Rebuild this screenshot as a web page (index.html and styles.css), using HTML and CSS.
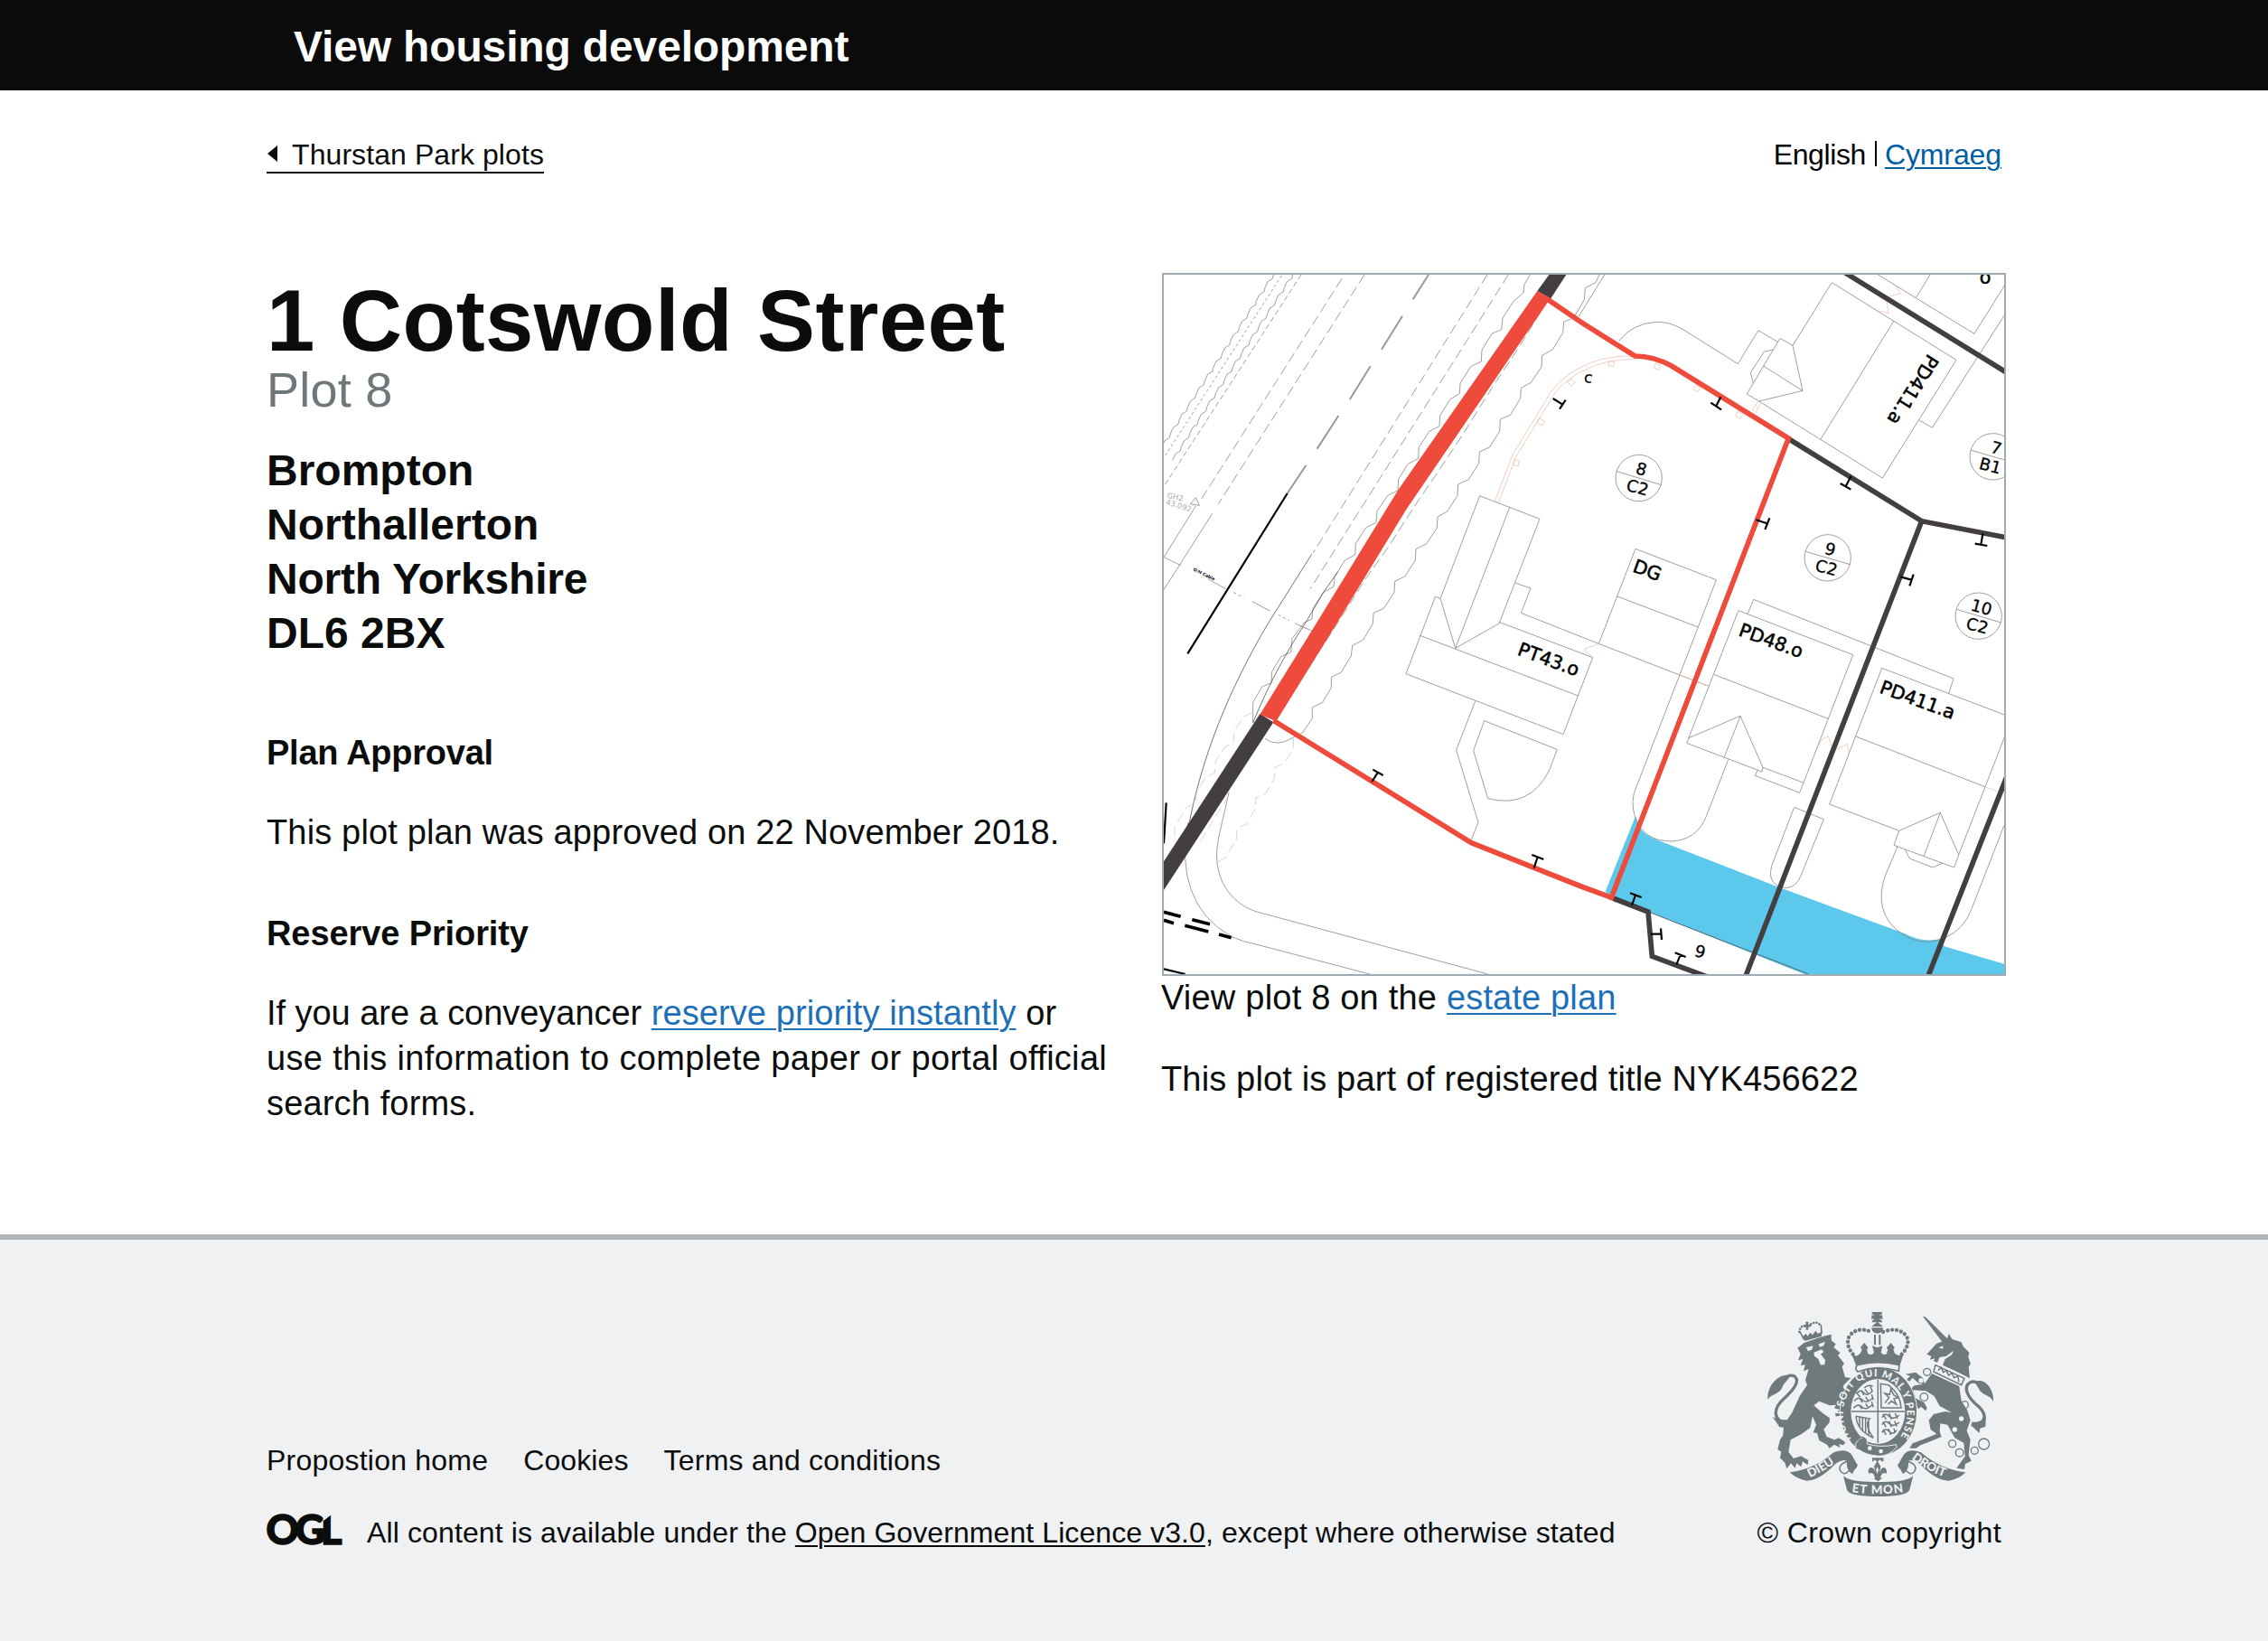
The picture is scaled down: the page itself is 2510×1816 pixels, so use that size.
FILE: index.html
```html
<!DOCTYPE html>
<html lang="en">
<head>
<meta charset="utf-8">
<title>View housing development</title>
<link rel="stylesheet" href="styles.css">
</head>
<body>
<header class="header">
  <div class="container"><span class="header-title">View housing development</span></div>
</header>

<nav class="container topbar">
  <a class="back" href="#"><svg class="back-arrow" viewBox="0 0 11 18"><path d="M11 0V18L0 9Z"/></svg>Thurstan Park plots</a>
  <div class="languages"><span class="lang-current">English</span><a class="lang-link" href="#">Cymraeg</a></div>
</nav>

<main class="container main">
  <section class="details">
    <h1 class="title">1 Cotswold Street</h1>
    <div class="plot">Plot 8</div>
    <div class="address">Brompton<br>Northallerton<br><span class="address-county">North Yorkshire</span><br>DL6 2BX</div>
    <h2 class="subhead subhead-approval">Plan Approval</h2>
    <p class="text">This plot plan was approved on 22 November 2018.</p>
    <h2 class="subhead">Reserve Priority</h2>
    <p class="text reserve"><span class="lead">If you are a conveyancer </span><a class="link" href="#">reserve priority instantly</a> or<br><span class="wide">use this information to complete paper or portal o<span class="lig">ffi</span>cial</span><br>search forms.</p>
  </section>

  <section class="plan">
    <svg class="map" viewBox="24 42 2790 2322" preserveAspectRatio="none">
      <!-- flood zone -->
      <path class="water" d="M1590 1840L1605 1880Q1625 1905 1660 1918L2065 2075 2485 2230Q2540 2260 2600 2248L2615 2272 2820 2332V2370H2165L1640 2160 1515 2110 1490 2090Z"/>
      <path class="thin dark" d="M1640 2160L2165 2364"/>
      <!-- road and verge -->
      <g class="thin">
        <path d="M388 42l-3 13-16 10-9.500 21l-3 13-16 10-9.500 21l-3 13-16 10-9.500 21l-3 13-16 10-9.500 21l-3 13-16 10-9.500 21l-3 13-16 10-9.500 21l-3 13-16 10-9.500 21l-3 13-16 10-9.500 21l-3 13-16 10-9.500 21l-3 13-16 10-9.500 21l-3 13-16 10-9.500 21l-3 13-16 10-9.500 21l-3 13-16 10-9.500 21"/>
        <path d="M452 42l-3 13-16 10-9.500 21l-3 13-16 10-9.500 21l-3 13-16 10-9.500 21l-3 13-16 10-9.500 21l-3 13-16 10-9.500 21l-3 13-16 10-9.500 21l-3 13-16 10-9.500 21l-3 13-16 10-9.500 21l-3 13-16 10-9.500 21l-3 13-16 10-9.500 21l-3 13-16 10-9.500 21l-3 13-16 10-9.500 21l-3 13-16 10-9.500 21l-3 13-16 10-9.500 21"/>
        <path class="dash-s" d="M415 45L24 650"/>
        <path class="dash-m" d="M480 42L24 745"/>
        <path class="dash-l" d="M615 55L150 785M690 42L205 803M1098 42L520 965M1168 42L510 1085"/>
        <path class="dash-l" d="M1275 165L1205 280 1115 415 1015 575 925 710 850 820 770 945 695 1050 600 1200 535 1300 470 1400 400 1515"/>
        <path d="M130 810L24 980M185 835L24 1088M24 980L80 1007M170 1052L230 1085M318 1127L376 1158M460 1200L515 1224"/>
        <path class="dash-s" d="M256 1097L290 1113M404 1171L440 1190"/>
        <path d="M1240 42L1221 74 1218 102 1185 130 1149 186 1145 224 1113 238 1080 292 1078 330 1043 347 1008 402 1006 437 975 455 941 510 939 545 905 562 871 615 869 652 835 670 803 720 801 758 767 775 732 827 729 865 695 882 661 935 659 972 625 990 591 1045 588 1078 555 1095 519 1150 516 1185 490 1197 450 1250 446 1295 413 1310 383 1360 381 1397 350 1410 320 1462 320 1530"/>
        <path d="M1470 42L1458 68 1423 86 1420 125 1385 185 1352 198 1349 235 1315 290 1280 310 1278 348 1243 400 1210 418 1208 452 1174 508 1141 522 1139 562 1105 615 1072 630 1070 668 1036 722 1001 738 999 775 965 828 933 846 931 883 895 936 861 953 859 990 824 1044 791 1060 789 1097 754 1150 720 1165 718 1200 685 1255 650 1273 646 1308 612 1363 580 1378 580 1413 550 1463 517 1478 517 1515 485 1562 450 1580Q400 1612 360 1582M1487 42L1402 180"/>
        <path class="dark" d="M515 970L370 1200C240 1420 150 1640 105 1880M602 1028L555 1095 493 1200C420 1310 360 1430 320 1530"/>
        <path d="M105 1860Q80 1990 115 2085 150 2185 250 2240 290 2258 330 2265L708 2364M240 1760C225 1840 195 1930 200 1980 205 2080 270 2145 355 2163L1100 2364"/>
      </g>
      <path class="thin pale dash-l" d="M320 1495L288 1510 257 1560 255 1597 227 1610 196 1658 194 1695 162 1712 133 1760 130 1795 98 1812 60 1875V1910M455 1580L453 1615 425 1663 392 1678 391 1715 362 1765 330 1778 328 1815 300 1865 267 1880 265 1917 228 1978 190 1998M240 1770L135 1940"/>
      <path class="centre-dash" d="M903 42L851 124M816 179L747 290M710 346L641 457M604 510L533 620M496 675L434 768"/>
      <path class="ink" d="M434 768L103 1300M32 1795L24 1930M24 2347L95 2364"/>
      <path class="ink heavy" d="M24 2158L80 2173M118 2183L177 2198M24 2185L57 2195M94 2203L172 2223M207 2232L248 2243"/>
      <path class="thin" d="M130 782L112 803 142 808Z"/>
      <text class="survey" transform="translate(34 782) rotate(13)">GH2</text>
      <text class="survey" transform="translate(29 804) rotate(17)">43.092</text>
      <text class="cable" transform="translate(121 1024) rotate(26)">O/H Cable</text>

      <!-- houses and drives -->
      <g class="thin" transform="translate(1410 0)">
        <path d="M832 68L702 277 735 427 590 462 550 438 660 253 702 277M832 68L1245 325 1000 717 590 462M1038 195L795 588M605 345L735 427M655 267L588 227 520 338 335 222Q290 197 250 199 170 203 125 262M637 291L607 298 562 367 571 402M1122 525L1165 550 1404 178M985 42L1305 238 1410 70M1158 42L1112 117"/>
        <circle cx="191" cy="717" r="77"/><circle cx="818" cy="982" r="77"/><circle cx="1319" cy="1175" r="77"/><circle cx="1367" cy="646" r="77"/>
        <path d="M118 695L266 740M745 961L892 1004M1246 1153L1394 1197M1294 625L1410 658"/>
        <path d="M180 952L448 1055 388 1212 180 1750Q163 1790 178 1840 205 1923 300 1923 385 1918 415 1840L488 1652M180 952L58 1267M120 1110L388 1212"/>
        <path d="M522 1157L350 1597 600 1692 603 1678 528 1507 357 1580M528 1507L475 1643M522 1157L902 1304 725 1762 577 1705 585 1687M603 1678L737 1728M442 1370L820 1516M553 1167L572 1120 1236 1383 1220 1432"/>
        <path d="M1410 1505L998 1348 824 1800 1055 1888 1192 1828 1253 1968 1238 2010 1038 1936 1055 1888M1192 1828L1137 1973M1253 1968L1410 1565M912 1575L1340 1742M1075 1950L1090 1980 1167 2010 1200 1995M1050 1940L1010 2035Q975 2135 1030 2200 1110 2285 1210 2242 1270 2215 1295 2150L1404 1870"/>
        <path d="M707 1810L805 1850 730 2035Q715 2075 680 2078 615 2070 632 2005Z"/>
      </g>
      <g class="thin">
        <path d="M1073 776L1272 853 1137 1200 992 1282 942 1117 1073 776M942 1117L925 1111 828 1367 1350 1568 1448 1313 1137 1195M1172 815L992 1282M875 1240L1400 1440M1190 1065L1242 1083 1210 1165 1468 1267 1830 1407"/>
        <path d="M1058 1458L995 1620 1068 1860 1045 1918M1088 1523L1330 1618 1305 1685Q1240 1817 1100 1781L1052 1622Z"/>
      </g>
      <g class="fence">
        <path d="M1123 795L1182 640 1310 430Q1360 365 1440 335 1500 310 1590 312M1135 799L1194 645 1320 438Q1365 380 1440 350 1500 322 1590 323"/>
        <path d="M1997 462L1978 495M2007 466L1988 500M1735 1370L1833 1408M1448 1313L1420 1285 1468 1267M2750 1742L2790 1757"/>
        <path d="M2197 1605L2210 1585 2230 1574 2242 1610M2258 1618L2292 1600Q2300 1620 2298 1637M2450 72L2470 105 2422 117 2430 170 2400 162"/>
        <path d="M1377 388l12 12-12 11-12-12ZM1270 519l18 8-8 16-17-9ZM1187 655l18 6-5 17-16-5ZM1502 328l17 4-2 15-17-4ZM1657 336l16 7-5 15-17-6ZM1790 408l16 9-9 15-15-9ZM1931 495l16 10-9 15-15-9Z"/>
      </g>

      <!-- plot boundaries -->
      <path class="boundary" d="M2285 35L2822 367M2100 588L2540 860 2822 915M2540 860L1956 2370M2824 1705L2562 2370M1515 2112L1632 2157 1645 2305 1826 2372"/>
      <path class="boundary-fill" d="M1303 42H1360L1308 122 1264 96ZM343 1500L388 1528 24 2085V1990Z"/>
      <path class="plot-line" d="M1290 118L1410 200 1588 312Q1650 312 1710 345L2098 585 1510 2110 1410 2073 1045 1928 388 1522"/>
      <path class="plot-fill" d="M1264 96L1308 122 1296 137 830 820 598 1200 397 1525 343 1502 530 1200 803 755Z"/>

      <path class="ink" d="M1338 488L1358 458M1348 473L1316 453M1840 467L1875 490M1858 478L1873 448M2270 735L2305 755M2288 745L2305 712M2035 850L2020 888M2027 868L1990 856M2513 1037L2500 1075M2506 1055L2470 1045M2717 935L2758 942M2737 938L2743 902M718 1685L752 1704M735 1694L715 1725M1246 1968L1285 1983M1265 1975L1253 2012M1572 2095L1610 2109M1590 2102L1578 2135M1674 2212L1677 2250M1676 2231L1640 2231M1721 2293L1757 2307M1739 2300L1726 2332"/>

      <g class="label">
        <text transform="translate(1605 706) rotate(15)">8</text><text transform="translate(1592 767) rotate(15)">C2</text>
        <text transform="translate(2232 972) rotate(15)">9</text><text transform="translate(2219 1033) rotate(15)">C2</text>
        <text transform="translate(2734 1165) rotate(15)">10</text><text transform="translate(2720 1226) rotate(15)">C2</text>
        <text transform="translate(2783 636) rotate(15)">7</text><text transform="translate(2763 695) rotate(15)">B1</text>
        <text transform="translate(1800 2308) rotate(15)">9</text>
        <text class="small" transform="translate(1431 400) rotate(8)">c</text>
      </g>
      <g class="house">
        <text transform="translate(1577 1027) rotate(20)">DG</text>
        <text transform="translate(1929 1239) rotate(20)">PD48.o</text>
        <text transform="translate(2397 1429) rotate(20)">PD411.a</text>
        <text transform="translate(1195 1303) rotate(20)">PT43.o</text>
        <text transform="translate(2562 302) rotate(122)">PD411.a</text>
        <text transform="translate(2732 72)">o</text>
      </g>
    </svg>
    <p class="text caption"><span class="view">View plot 8 on the </span><a class="link" href="#">estate plan</a></p>
    <p class="text registered">This plot is part of registered title NYK456622</p>
  </section>
</main>

<footer class="footer">
  <div class="container footer-inner">
    <div class="footer-left">
      <ul class="footer-links"><li>Propostion home</li><li class="cookies">Cookies</li><li>Terms and conditions</li></ul>
      <div class="licence">
        <svg class="ogl" viewBox="0 0 83 40"><text class="ogl-text" x="-1.500" y="35.500" textLength="84" lengthAdjust="spacing">OGL</text><path class="ogl-cut" d="M60 0H73L71 3 62 10Z"/></svg>
        <span>All content is available under the <a class="licence-link" href="#">Open Government Licence v3.0</a>, except where otherwise stated</span>
      </div>
    </div>
    <div class="crown">
      <svg class="crest" viewBox="75 60 760 622">
        <defs>
          <path id="garter" d="M357 487A106 124 0 1 1 500 502"/>
          <path id="dieu" d="M219 616Q275 590 322 553"/>
          <path id="mon" d="M350 662Q445 678 540 662"/>
          <path id="droit" d="M556 553Q610 596 680 618"/>
        </defs>
        <!-- lion -->
        <path class="c" d="M178 185L200 168 245 152 270 145 290 140V160L305 172 298 183 320 202 312 210 333 236 326 248 336 282 355 285 330 310 345 340 352 385 348 418 335 408 330 428 320 408 306 416 303 402 318 390 300 385 306 374 285 376 250 362 232 376 262 402 285 418 284 432 265 455 275 480 300 490 315 484 338 498 330 508 316 504 320 516 300 506 284 518 276 506 250 492 243 468 230 466 240 440 228 412 220 450 190 472 155 490 148 530 165 552 190 544 214 558 212 574 195 562 190 580 175 568 170 584 156 568 142 586 136 566 120 550 124 530 112 522 120 490 130 475 132 440 160 400 185 345 210 308 204 292 215 255 198 262 203 240 188 244 196 222 180 226 188 205Z"/>
        <path class="b" d="M207 183L230 178 225 192 212 195ZM248 172L270 165 265 178 252 182ZM232 200L258 190 265 198 255 206 270 225 268 240 255 242 247 222 234 212Z"/>
        <path class="l" d="M138 432C95 425 98 385 130 356 165 325 190 292 166 278 150 272 135 284 124 300"/>
        <path class="c" d="M152 276C112 270 76 312 79 356 90 338 120 338 128 315 132 300 150 292 152 276ZM94 413Q115 428 155 422L140 450 118 448 108 432Z"/>
        <path class="l3" d="M200 158L185 130M202 157L258 138M258 138L256 108"/>
        <path class="dots" d="M184 132Q188 104 210 116M214 112Q240 90 256 112"/>
        <path class="c" d="M196 146L206 138 212 146 220 134 228 142 238 128 246 138 256 132 258 146 202 162ZM205 98h9v10h9v7h-9v10h-8v-10h-8v-7h8Z"/>
        <!-- unicorn -->
        <path class="c" d="M594 80L602 82 680 158 658 164ZM607 206L640 170 674 158 680 138 692 156 722 166 728 180 748 200 745 216 753 238 746 248 750 286 715 268 660 242 668 222 690 208 696 194 672 212 650 216 642 234 630 228 634 220 618 224 622 212Z"/>
        <path class="b" d="M646 184L662 178 660 188Z"/>
        <path class="l4" d="M636 242L732 286 722 308 630 264ZM645 260L655 250 662 266 672 260 680 276 690 268 698 284 710 278 714 298"/>
        <path class="c" d="M624 270L715 312 722 360 742 392 752 425 740 460 752 490 746 540 755 560 735 570 732 588 706 584 722 562 734 545 730 500 700 484 676 440 652 436 650 462 656 480 618 496 586 508 572 518 550 518 560 502 600 487 640 470 620 456 614 425 630 405 668 396 690 400 650 378 632 345 604 328 562 325 570 352 598 366 608 384 604 394 588 380 580 388 566 366 550 345 554 322 566 310 596 305 580 302 560 284 550 296 540 290 552 278 536 272 570 266 594 284 600 304Z"/>
        <path class="l" d="M756 436C800 440 812 412 780 380 742 350 725 314 752 299 770 292 786 306 792 322"/>
        <path class="c" d="M766 298C800 280 832 325 828 362 815 338 792 345 780 320ZM752 440Q790 440 804 412L802 446 784 452 782 468Z"/>
        <g class="ring"><circle cx="608" cy="265" r="12"/><circle cx="598" cy="348" r="13"/><circle cx="733" cy="374" r="12"/><circle cx="692" cy="503" r="12"/><circle cx="716" cy="533" r="13"/><circle cx="766" cy="526" r="12"/><circle cx="797" cy="504" r="18"/></g>
        <path class="b" d="M580 293a8 8 0 1 1 16 0a8 8 0 1 1-16 0M714 420a8 8 0 1 1 16 0a8 8 0 1 1-16 0M692 456a8 8 0 1 1 16 0a8 8 0 1 1-16 0"/>
        <!-- garter and shield -->
        <ellipse class="c edge" cx="447" cy="396" rx="128" ry="148"/>
        <ellipse class="b" cx="445" cy="396" rx="90" ry="108"/>
        <text class="motto ring-text"><textPath href="#garter" textLength="530" lengthAdjust="spacing">HONI SOIT QUI MAL Y PENSE</textPath></text>
        <g class="l4">
          <path d="M445 290V500M357 396H534"/>
          <path d="M374 338q12-18 24-4t30-8M372 332l14 16M366 362q14-18 28-4t34-8M364 385q16-18 28-4t36-8M400 318q10-12 28-6M390 326l8 16M402 322l10 14M420 312l6 18M384 352l10 14M404 348l10 14M424 340l6 18M382 374l10 14M404 370l10 14M424 364l6 18"/>
          <path d="M454 304L456 384H522Q520 340 480 308ZM468 368l14-18-14-14 16 4 4-18 10 20 14 8-14 4 8 18-16-10-12 10"/>
          <path d="M372 412L418 420Q398 440 430 484M372 412Q376 460 430 484M384 416v34M394 418v44M404 420v50M414 424v50"/>
          <path d="M458 416q12-18 24-4t34-4M458 440q12-18 24-4t34-4M458 466q12-18 24-4t26-4M462 404l10 18M482 402l8 20M502 402l8 18M462 430l10 18M482 428l8 20M500 428l8 18M462 456l10 18M480 454l8 20M498 452l4 16"/>
        </g>
        <path class="c rim" d="M385 486Q402 476 410 492L408 503Q450 518 505 506L508 514Q480 546 446 544 404 540 384 524 368 518 372 500Z"/>
        <circle class="b" cx="418" cy="518" r="7"/><circle class="b" cx="455" cy="528" r="7"/>
        <path class="ring" d="M376 492Q390 474 402 486 412 500 396 508 384 528 372 514"/>
        <!-- crown -->
        <path class="c" d="M425 66h34v6l-10 6 11-2v14l-11-2 10 8v4h-34v-4l10-8-11 2v-14l11 2-10-6ZM443 98L462 114H424ZM424 118H462Q462 136 443 137 424 136 424 118ZM432 141H438V175H432ZM448 141H454V175H448Z"/>
        <path class="dots big" d="M362 206Q336 174 350 146 376 112 424 132M524 206Q554 174 540 146 512 112 462 132"/>
        <path class="c" d="M358 206Q376 218 388 200L392 190Q384 184 390 180L400 168 409 180Q416 184 408 190L412 204Q424 212 432 200L426 178 443 184 460 178 455 200Q464 212 474 204L478 190Q470 184 478 180L488 168 497 180Q504 184 496 190L500 202Q512 216 530 206L518 242Q446 222 372 242Z"/>
        <path class="l3" d="M376 242Q446 224 516 242L514 262Q446 240 378 264Q366 254 376 242Z"/>
        <!-- ribbon -->
        <path class="c" d="M152 598Q235 588 298 532 340 516 358 540L376 572 360 604Q338 590 342 560 322 552 300 574 250 626 208 626 175 620 152 598ZM736 598Q652 588 588 532 548 516 530 540L512 572 528 604Q550 590 546 560 566 552 588 574 638 626 680 626 716 620 736 598ZM330 610Q352 632 446 630 540 632 562 610L550 656Q540 678 446 678 350 678 342 656Z"/>
        <path class="l4" d="M376 572Q372 590 350 592 334 610 322 596 308 576 342 562M512 572Q516 590 538 592 554 610 566 596 580 576 546 562"/>
        <text class="motto"><textPath href="#dieu">DIEU</textPath></text>
        <text class="motto"><textPath href="#mon" textLength="172" startOffset="8" lengthAdjust="spacing">ET MON</textPath></text>
        <text class="motto"><textPath href="#droit">DROIT</textPath></text>
        <path class="c" d="M426 550H463V562H458L452 556 443 564 434 556 430 562H426Z"/>
        <path class="c" d="M443 560L454 578 450 600Q456 580 466 582 478 588 472 604 468 596 458 604L452 616H460L446 628 430 618H436L430 604Q420 596 416 604 408 590 420 582 432 580 438 600L432 578Z"/>
        <path class="b" d="M443 574V600M443 578L447 590 443 604 439 590Z"/>
      </svg>
      <div class="copyright">© Crown copyright</div>
    </div>
  </div>
</footer>
</body>
</html>
```
FILE: styles.css
```css
*{box-sizing:border-box}
body{margin:0;background:#fff;color:#0b0c0c;font-family:"Liberation Sans",Arial,sans-serif;font-size:38px;line-height:50px}
h1,h2,p,ul{margin:0;padding:0}
a{color:inherit}
.container{width:1920px;margin:0 auto}

.header{height:100px;padding-top:22px;background:#0b0b0b}
.header-title{display:block;padding-left:30px;color:#fff;font-size:48px;line-height:60px;font-weight:700;letter-spacing:-.15px}

.topbar{display:flex;justify-content:space-between;align-items:flex-start;padding-top:51px;font-size:32px;line-height:40px}
.back{display:flex;align-items:flex-start;height:41px;border-bottom:2px solid #0b0c0c;text-decoration:none;letter-spacing:.08px}
.back-arrow{width:11px;height:18px;margin:10px 16px 0 1px;fill:#0b0c0c}
.languages{display:flex}
.lang-current{position:relative;padding-right:12px;margin-right:9px;color:#000;letter-spacing:-.4px}
.lang-current::after{content:"";position:absolute;right:0;top:5px;width:2px;height:28px;background:#000}
.lang-link{color:#005ea5;letter-spacing:-.1px;text-decoration-thickness:2px;text-underline-offset:3px}

.main{display:flex;height:1174px;padding-top:110px}
.details{width:990px;flex:none;padding-top:6px}
.title{font-size:96px;line-height:94px;letter-spacing:.4px}
.plot{color:#6f777b;font-size:54px;line-height:58px;letter-spacing:.25px}
.address{margin-top:31px;font-size:48px;line-height:60px;font-weight:700}
.address-county{letter-spacing:-.2px}
.subhead{margin-top:62px;font-size:38px;line-height:50px;letter-spacing:-.1px}
.subhead-approval{margin-top:77px;letter-spacing:-.25px}
.text{letter-spacing:.15px}
.subhead + .text{margin-top:38px}
.lead{letter-spacing:-.04px}
.wide{letter-spacing:.34px}
.lig{letter-spacing:0}
.link{color:#1d70b8;text-decoration-thickness:2px;text-underline-offset:4px}
.reserve .link{letter-spacing:.1px}

.plan{width:935px;flex:none}
.map{display:block;width:934px;height:778px;margin-left:1px;border:2px solid #9fabb0;background:#fff;overflow:hidden}
.caption{margin-top:-1px}
.view{letter-spacing:.21px}
.registered{margin-top:40px}

.map path,.map circle{fill:none}
.map .thin{stroke:#868686;stroke-width:2.4}
.map .dark{stroke:#505050}
.map .pale{stroke:#ccc}
.map .dash-s{stroke-dasharray:9 9}
.map .dash-m{stroke-dasharray:18 10}
.map .dash-l{stroke-dasharray:34 15}
.map .centre-dash{stroke:#999;stroke-width:6}
.map .ink{stroke:#000;stroke-width:6.500}
.map .heavy{stroke-width:11}
.map .fence{stroke:#efc0b0;stroke-width:2.400}
.map .boundary{stroke:#433e40;stroke-width:17}
.map .boundary-fill{fill:#433e40}
.map .plot-line{stroke:#ee4b3c;stroke-width:17}
.map .plot-fill{fill:#ee4b3c}
.map .water{fill:#5bc8ec}
.map text{font-family:"DejaVu Sans",sans-serif;fill:#000}
.label text{font-size:55px;text-anchor:middle;stroke:#000;stroke-width:.8}
.label .small{font-size:50px}
.house text{font-size:62px;stroke:#000;stroke-width:1.6}
.map .survey{font-size:25px;fill:#aaa}
.map .cable{font-size:14px;font-weight:700}

.footer{height:450px;border-top:6px solid #b1b4b6;background:#f0f1f3;font-size:32px;line-height:40px}
.footer-inner{display:flex;justify-content:space-between}
.footer-left{padding-top:224px}
.footer-links{display:flex;gap:39px;list-style:none;letter-spacing:.22px}
.cookies{letter-spacing:.1px}
.licence{display:flex;margin-top:40px;letter-spacing:.12px}
.licence-link{letter-spacing:.08px;text-decoration-thickness:2px;text-underline-offset:3px}
.ogl{width:83px;height:40px;margin:-3px 27px 0 1px;overflow:visible}
.ogl-text{font-family:Lato,sans-serif;font-weight:900;font-size:45px;fill:#0b0c0c;stroke:#0b0c0c;stroke-width:1.500}
.ogl-cut{fill:#f0f1f3}
.crown{padding-top:78px;text-align:right}
.crest{display:block;width:253.300px;height:207.300px;margin:0 7px 0 auto}
.copyright{margin-top:19px;letter-spacing:.4px}

.c{fill:#6f7a7d}
.b{fill:#f0f1f3}
.l,.l3,.l4,.ring,.dots{fill:none;stroke:#6f7a7d}
.l{stroke-width:10}
.l3{stroke-width:5}
.l4{stroke-width:4.500}
.ring{stroke-width:4}
.dots{stroke-width:8;stroke-linecap:round;stroke-dasharray:.1 10}
.dots.big{stroke-width:13;stroke-dasharray:.1 15}
.rim,.edge{stroke:#f0f1f3;stroke-width:3}
.motto{font-family:Lato,sans-serif;font-weight:900;font-size:40px;fill:#f0f1f3}
.ring-text{font-size:34px}
```
